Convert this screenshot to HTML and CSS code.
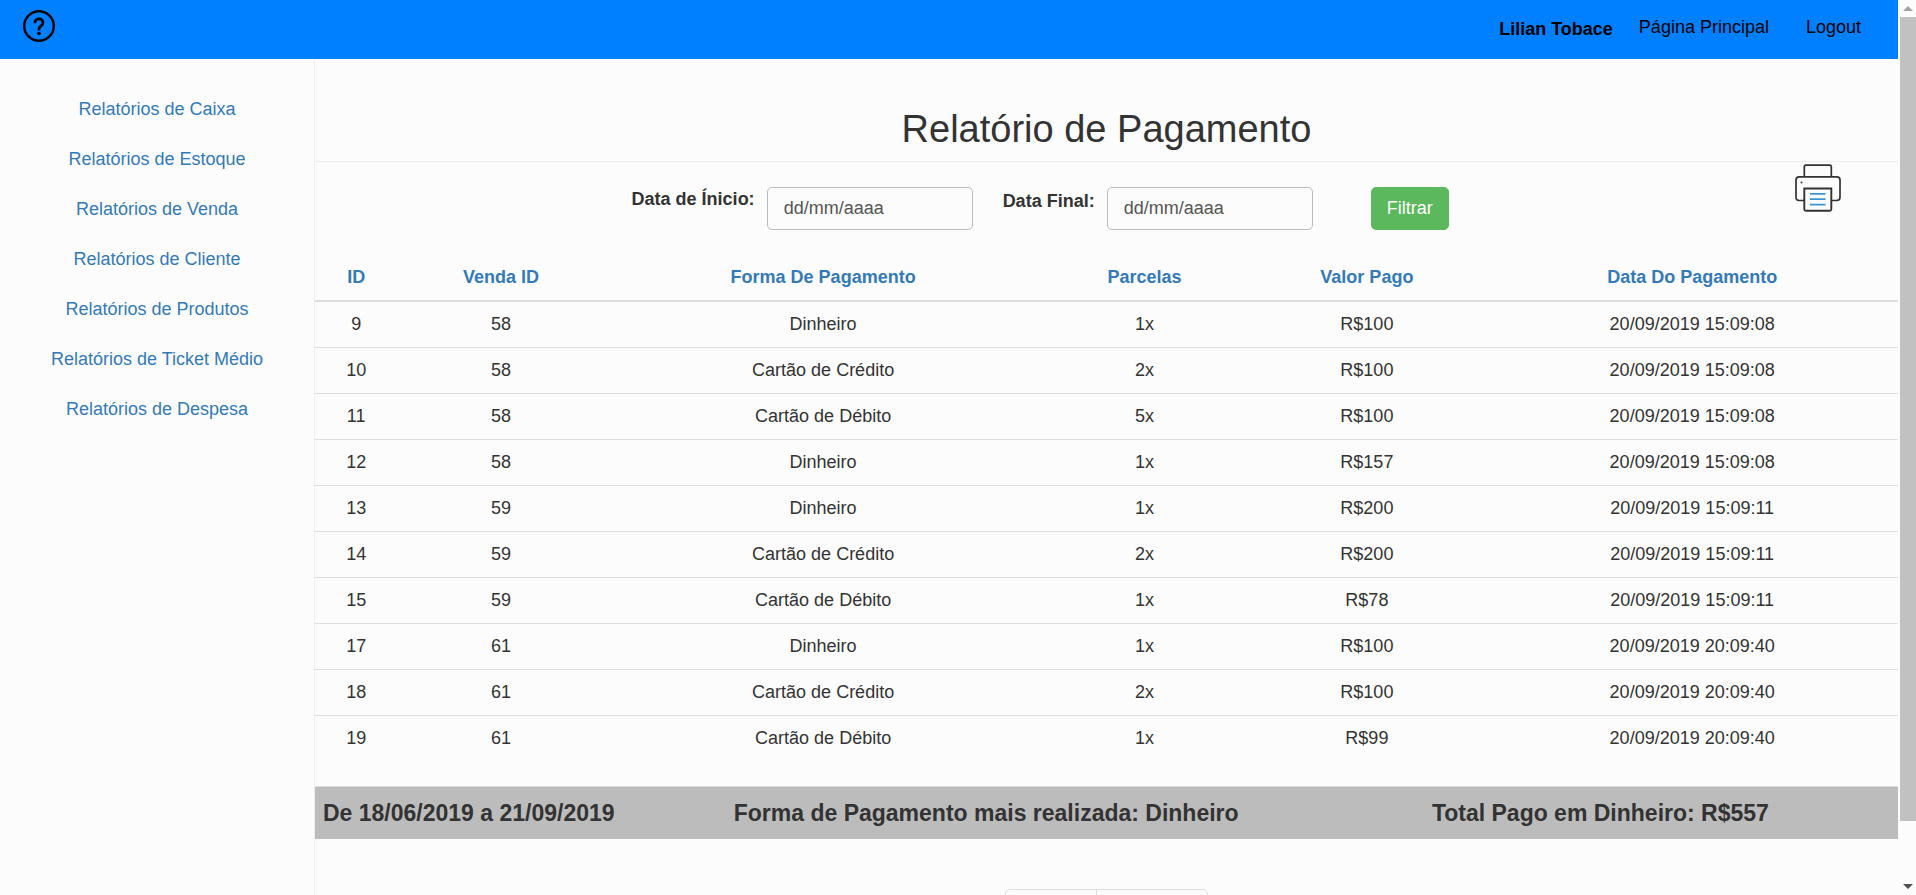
FILE: index.html
```html
<!DOCTYPE html>
<html lang="pt-BR">
<head>
<meta charset="utf-8">
<title>Relatório de Pagamento</title>
<link rel="stylesheet" href="styles.css">
</head>
<body>
<div class="viewport">
  <div class="page">
    <header class="topbar">
      <a class="help" href="#" aria-label="Ajuda">
        <svg width="32" height="32" viewBox="0 0 32 32" fill="none" stroke="#000">
          <circle cx="16" cy="16" r="14.8" stroke-width="2.4"/>
          <path d="M12 13.300v-.9a4 3.600 0 0 1 8 0c0 2.400-1.300 3-2.500 4-.9.800-1.500 1.400-1.500 2.600v1.500" stroke-width="2.800"/>
          <circle cx="16" cy="23.500" r="1.800" fill="#000" stroke="none"/>
        </svg>
      </a>
      <strong class="user">Lilian Tobace</strong>
      <nav class="topnav">
        <a href="#">Página Principal</a>
        <a href="#">Logout</a>
      </nav>
    </header>

    <div class="layout">
      <nav class="sidebar">
        <a href="#">Relatórios de Caixa</a>
        <a href="#">Relatórios de Estoque</a>
        <a href="#">Relatórios de Venda</a>
        <a href="#">Relatórios de Cliente</a>
        <a href="#">Relatórios de Produtos</a>
        <a href="#">Relatórios de Ticket Médio</a>
        <a href="#">Relatórios de Despesa</a>
      </nav>

      <main class="content">
        <h1 class="title">Relatório de Pagamento</h1>

        <div class="toolbar">
          <form class="filter">
            <label for="inicio">Data de Ínicio:</label>
            <input id="inicio" type="text" placeholder="dd/mm/aaaa">
            <label class="next" for="final">Data Final:</label>
            <input id="final" type="text" placeholder="dd/mm/aaaa">
            <button class="submit" type="button">Filtrar</button>
          </form>
          <button class="print" type="button" aria-label="Imprimir">
            <svg width="46" height="48" viewBox="0 0 46 48" fill="none" stroke="#333" stroke-width="1.7">
              <path d="M9.3 12.5V2.8q0-1.7 1.7-1.7h23.6q1.7 0 1.7 1.7v9.7"/>
              <path d="M9.3 36.5H4.2Q1 36.5 1 33.3V16Q1 12.8 4.2 12.8H41.8Q45 12.8 45 16V33.3Q45 36.5 41.8 36.5H36.3"/>
              <path d="M9.3 24.5h27V45.2q0 1.500-1.500 1.500H10.800q-1.500 0-1.500-1.500z" stroke-width="1.9"/>
              <path d="M15 29.8h15.500M15 35.200h15.500M15 40.600h15.500" stroke="#3a96d2" stroke-width="1.8"/>
              <circle cx="6.5" cy="18.5" r="1" fill="#333" stroke="none"/>
            </svg>
          </button>
        </div>

        <table class="payments">
          <colgroup>
            <col class="c-id"><col class="c-sale"><col class="c-method"><col class="c-parts"><col class="c-value"><col class="c-date">
          </colgroup>
          <thead>
            <tr>
              <th><a href="#">ID</a></th>
              <th><a href="#">Venda ID</a></th>
              <th><a href="#">Forma De Pagamento</a></th>
              <th><a href="#">Parcelas</a></th>
              <th><a href="#">Valor Pago</a></th>
              <th><a href="#">Data Do Pagamento</a></th>
            </tr>
          </thead>
          <tbody>
            <tr><td>9</td><td>58</td><td>Dinheiro</td><td>1x</td><td>R$100</td><td>20/09/2019 15:09:08</td></tr>
            <tr><td>10</td><td>58</td><td>Cartão de Crédito</td><td>2x</td><td>R$100</td><td>20/09/2019 15:09:08</td></tr>
            <tr><td>11</td><td>58</td><td>Cartão de Débito</td><td>5x</td><td>R$100</td><td>20/09/2019 15:09:08</td></tr>
            <tr><td>12</td><td>58</td><td>Dinheiro</td><td>1x</td><td>R$157</td><td>20/09/2019 15:09:08</td></tr>
            <tr><td>13</td><td>59</td><td>Dinheiro</td><td>1x</td><td>R$200</td><td>20/09/2019 15:09:11</td></tr>
            <tr><td>14</td><td>59</td><td>Cartão de Crédito</td><td>2x</td><td>R$200</td><td>20/09/2019 15:09:11</td></tr>
            <tr><td>15</td><td>59</td><td>Cartão de Débito</td><td>1x</td><td>R$78</td><td>20/09/2019 15:09:11</td></tr>
            <tr><td>17</td><td>61</td><td>Dinheiro</td><td>1x</td><td>R$100</td><td>20/09/2019 20:09:40</td></tr>
            <tr><td>18</td><td>61</td><td>Cartão de Crédito</td><td>2x</td><td>R$100</td><td>20/09/2019 20:09:40</td></tr>
            <tr><td>19</td><td>61</td><td>Cartão de Débito</td><td>1x</td><td>R$99</td><td>20/09/2019 20:09:40</td></tr>
          </tbody>
        </table>

        <div class="summary">
          <strong class="period">De 18/06/2019 a 21/09/2019</strong>
          <strong>Forma de Pagamento mais realizada: Dinheiro</strong>
          <strong>Total Pago em Dinheiro: R$557</strong>
        </div>

        <div class="pager">
          <button type="button" aria-label="Página anterior"></button>
          <button type="button" aria-label="Próxima página"></button>
        </div>
      </main>
    </div>
  </div>

  <div class="scrollbar" aria-hidden="true">
    <span class="arrow up"></span>
    <span class="track"><span class="thumb"></span></span>
    <span class="arrow down"></span>
  </div>
</div>
</body>
</html>
```

FILE: styles.css
```css
* { box-sizing: border-box; }

body {
  margin: 0;
  background: #fcfcfc;
  color: #333;
  font-family: "Liberation Sans", Arial, sans-serif;
  font-size: 18px;
  line-height: 25px;
}

a { color: #337ab7; text-decoration: none; }

button, input { font: inherit; }

.viewport {
  display: flex;
  gap: 2px;
  height: 100vh;
  overflow: hidden;
}

.page {
  flex: 1;
  min-width: 0;
  display: flex;
  flex-direction: column;
}

/* Top bar */
.topbar {
  display: flex;
  align-items: center;
  padding: 0 37px 0 23px;
  background: #0080ff;
  border-bottom: 1px solid #fff;
  color: #000;
}

.help {
  display: flex;
  align-self: flex-start;
  margin-top: 10px;
}

.user { margin-left: auto; }

.topnav {
  display: flex;
  gap: 37px;
  padding: 15px 0 19px 26px;
}

.topnav a { color: #000; }

/* Columns */
.layout {
  flex: 1;
  display: flex;
}

.sidebar {
  width: 315px;
  flex: none;
  display: flex;
  flex-direction: column;
  padding-top: 24px;
  border-right: 1px solid #eee;
  text-align: center;
  line-height: 50px;
}

.content { flex: 1; min-width: 0; }

.title {
  margin: 0;
  padding: 48px 0 11px;
  border-bottom: 1px solid #eee;
  font-size: 38px;
  font-weight: 400;
  line-height: 42px;
  text-align: center;
}

/* Filter and print */
.toolbar {
  display: flex;
  align-items: flex-start;
}

.filter {
  flex: 1;
  display: flex;
  align-items: flex-start;
  gap: 12px;
  padding: 25px 0 25px 20%;
}

.filter label { font-weight: 700; }

.filter .next { margin-left: 18px; padding-top: 2px; }

.filter input {
  width: 206px;
  height: 43px;
  padding: 0 16px;
  border: 1px solid #bbb;
  border-radius: 5px;
  background: #fcfcfc;
  color: #555;
}

.filter input::placeholder { color: #555; opacity: 1; }

.submit {
  height: 43px;
  margin-left: 46px;
  padding: 0 15px;
  border: 1px solid #5cb85c;
  border-radius: 5px;
  background: #5cb85c;
  color: #fff;
}

.print {
  display: flex;
  margin: 2px 57px 0 0;
  padding: 0;
  border: 0;
  background: none;
}

/* Payments */
.payments {
  width: 100%;
  table-layout: fixed;
  border-collapse: collapse;
  text-align: center;
}

.payments th, .payments td { padding: 10px; }

.payments th { border-bottom: 2px solid #ddd; }

.payments td { border-top: 1px solid #ddd; }

.payments tr:first-child td { border-top: 0; }

.c-id { width: 5.2%; }
.c-sale { width: 13.1%; }
.c-method { width: 27.6%; }
.c-parts { width: 13%; }
.c-value { width: 15.1%; }
.c-date { width: 26%; }

.summary {
  display: grid;
  grid-template-columns: 22.4% 40% 37.6%;
  margin-top: 25px;
  padding: 14px 0 13px;
  border-top: 1px solid #ddd;
  background: #bcbcbc;
  font-size: 23px;
  text-align: center;
}

.period { padding-left: 8px; text-align: left; }

.pager {
  display: flex;
  justify-content: center;
  margin-top: 50px;
}

.pager button {
  width: 92px;
  height: 43px;
  border: 1px solid #ddd;
  border-radius: 5px 0 0 5px;
  background: #fcfcfc;
}

.pager button + button {
  width: 112px;
  margin-left: -1px;
  border-radius: 0 5px 5px 0;
}

/* Scrollbar */
.scrollbar {
  width: 16px;
  flex: none;
  display: flex;
  flex-direction: column;
}

.arrow {
  display: flex;
  align-items: center;
  justify-content: center;
  height: 17px;
}

.arrow::before {
  content: "";
  border: 5px solid transparent;
}

.up::before { border-top: 0; border-bottom-color: #a3a3a3; }

.down::before { border-bottom: 0; border-top-color: #505050; }

.track { flex: 1; }

.thumb {
  display: block;
  height: 93.4%;
  background: #c1c1c1;
}
```
